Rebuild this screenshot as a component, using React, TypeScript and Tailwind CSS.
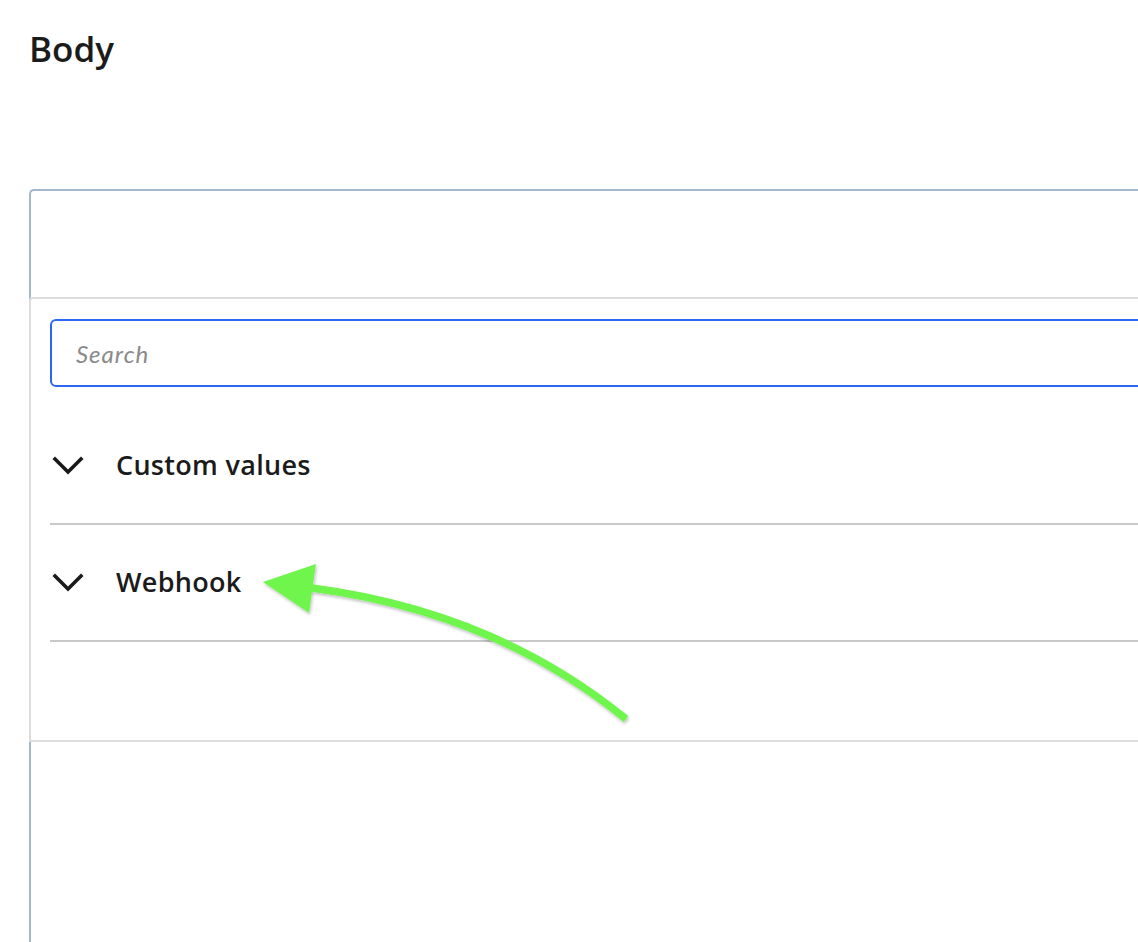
import { useState } from 'react'

function Chevron() {
  return (
    <svg width="34" height="22" viewBox="0 0 34 22" className="shrink-0">
      <polyline points="3,4 16,17 29,4" fill="none" stroke="#1a1a1a" strokeWidth="3.6" strokeLinecap="square" />
    </svg>
  )
}

function Row({ label, first }: { label: string; first?: boolean }) {
  return (
    <div className={`flex items-center h-[117px] border-b-2 border-[#c9c9c9] ${first ? 'mt-[21px]' : ''}`}>
      <div className="pl-[2px]">
        <Chevron />
      </div>
      <span className="ml-[30px] text-[27px] font-semibold text-[#1b1b1b] tracking-[0.3px]" style={{ fontFamily: '"Open Sans", "Noto Sans", sans-serif' }}>
        {label}
      </span>
    </div>
  )
}

function Arrow() {
  return (
    <svg className="absolute left-0 top-0 pointer-events-none" width="1138" height="942" viewBox="0 0 1138 942">
      <defs>
        <filter id="sh" x="-10%" y="-10%" width="120%" height="130%">
          <feDropShadow dx="1" dy="2" stdDeviation="1.5" floodColor="#000" floodOpacity="0.25" />
        </filter>
      </defs>
      <g filter="url(#sh)">
        <path d="M312 588 Q 495 612 626 719" fill="none" stroke="#70f54e" strokeWidth="7.5" />
        <polygon points="263,582 316,564 309,613" fill="#70f54e" />
      </g>
    </svg>
  )
}

export default function App() {
  const [query, setQuery] = useState('')

  return (
    <div className="relative h-[942px] w-[1138px] overflow-hidden bg-white">
      <div className="pl-[29px] pt-[27px]">
        <h1 className="text-[35px] leading-[44px] font-semibold text-[#1b1b1b]" style={{ fontFamily: '"Open Sans", "Noto Sans", sans-serif' }}>
          Body
        </h1>
        <div className="mt-[118px] w-[1200px] h-[800px] border-t-2 border-l-2 border-[#a4b7cf] rounded-tl-[5px]">
          <div className="h-[106px]" />
          <div className="-ml-[2px] border-t-2 border-l-2 border-b-2 border-[#dddddd] rounded-tl-[4px] pl-[19px] pt-[20px] pb-[98px] bg-white">
            <input
              value={query}
              onChange={(e) => setQuery(e.target.value)}
              placeholder="Search"
              className="block w-full h-[68px] rounded-[6px] border-2 border-[#2b67f3] px-[24px] text-[24px] tracking-[1px] italic text-[#333] placeholder:text-[#8a8a8a] outline-none"
              style={{ fontFamily: 'Lato, "Open Sans", sans-serif' }}
            />
            <Row label="Custom values" first />
            <Row label="Webhook" />
          </div>
        </div>
      </div>
      <Arrow />
    </div>
  )
}
